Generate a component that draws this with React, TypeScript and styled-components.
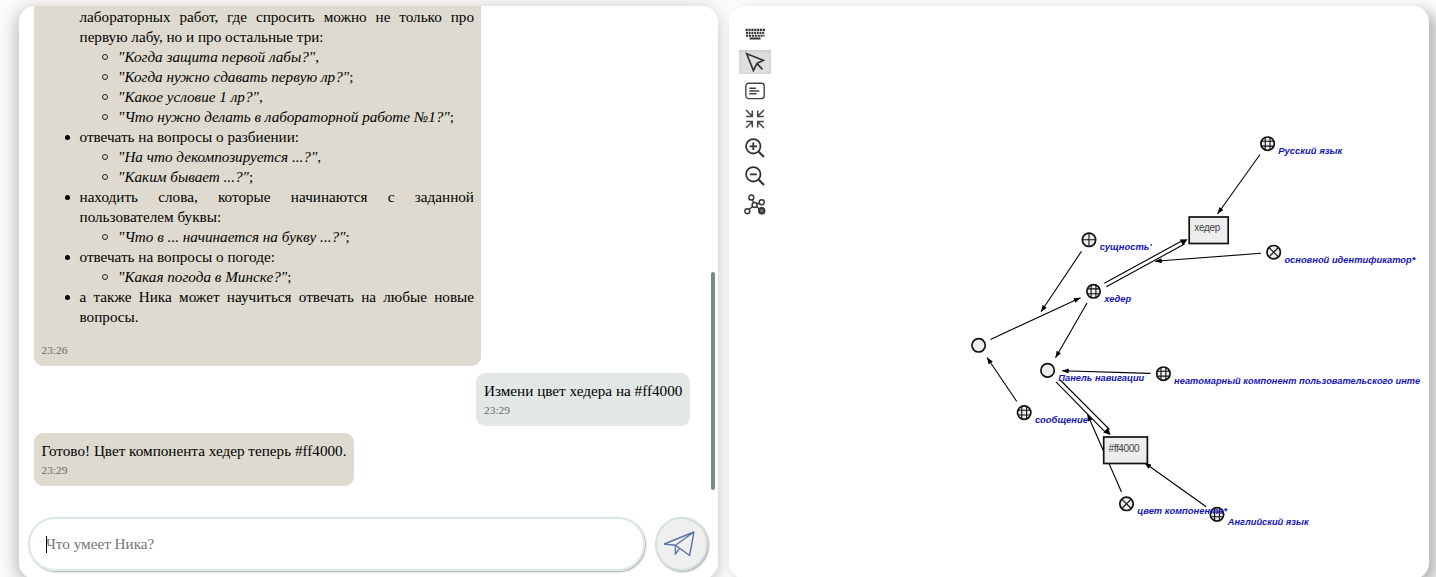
import React from 'react';
import styled, { createGlobalStyle } from 'styled-components';

const GlobalStyle = createGlobalStyle`
  *, *::before { box-sizing: border-box; }
  body {
    margin: 0;
    overflow: hidden;
    background: #fdfafb;
    font-family: "Liberation Serif", "Times New Roman", serif;
    color: #000;
  }
`;

const Page = styled.main`
  display: flex;
  gap: 11px;
  height: 577px;
  padding: 6px 7px 0 19px;
  overflow: hidden;
`;

const Panel = styled.section`
  display: flex;
  height: 573px;
  background: #fff;
  border-radius: 16px;
  overflow: hidden;
`;

const ChatPanel = styled(Panel)`
  flex: 0 0 699px;
  flex-direction: column;
  box-shadow: -2px 4px 18px rgba(0, 0, 0, 0.28);
`;

const GraphPanel = styled(Panel)`
  flex: 1;
  box-shadow: 8px 5px 14px rgba(0, 0, 0, 0.28);
`;

const Feed = styled.div`
  display: flex;
  height: 484px;
  padding-right: 3px;
`;

const Messages = styled.div`
  flex: 1;
  display: flex;
  flex-direction: column;
  justify-content: flex-end;
  gap: 7.7px;
  padding: 0 21px 4.4px 15px;
  overflow: hidden;
`;

const ScrollTrack = styled.div`
  width: 4px;
  padding-top: 266px;
`;

const ScrollThumb = styled.div`
  height: 218px;
  border-radius: 2px;
  background: #748c86;
`;

const Bubble = styled.article<{ $own?: boolean; $width: number }>`
  flex: none;
  align-self: ${(p) => (p.$own ? 'flex-end' : 'flex-start')};
  width: ${(p) => p.$width}px;
  padding: 8px 7px 5.2px ${(p) => (p.$own ? 8 : 7.5)}px;
  border-radius: 9px;
  background: ${(p) => (p.$own ? '#e2e8e6' : '#dedacf')};
  font-size: 15.2px;
  line-height: 19.95px;
`;

const Line = styled.p`
  margin: 0;
  white-space: nowrap;
`;

const Time = styled.time`
  display: block;
  font-size: 11.4px;
  line-height: 19.2px;
  color: #696969;
`;

const Topics = styled.ul`
  margin: 0 0 14.6px;
  padding-left: 38px;
  list-style: none;
  text-align: justify;
`;

const Topic = styled.li<{ $continued?: boolean }>`
  &::before {
    content: '';
    display: ${(p) => (p.$continued ? 'none' : 'inline-block')};
    width: 5px;
    height: 5px;
    margin: 0 9.3px 0 -14.3px;
    border-radius: 50%;
    background: #000;
    vertical-align: 2px;
  }
`;

const Examples = styled.ul`
  margin: 0;
  padding-left: 38.5px;
  list-style: none;
`;

const Example = styled.li`
  &::before {
    content: '';
    display: inline-block;
    width: 6px;
    height: 6px;
    margin: 0 9.8px 0 -15.8px;
    border: 1px solid #222;
    border-radius: 50%;
    vertical-align: 2px;
  }
`;

const Composer = styled.form`
  display: flex;
  gap: 10px;
  padding: 27px 10.5px 0 9px;
`;

const Prompt = styled.div`
  flex: 1;
  display: flex;
  align-items: center;
  height: 54px;
  padding-left: 16px;
  border: 2px solid #dce8e6;
  border-radius: 27px;
  box-shadow: 1px 1px 2px rgba(0, 0, 0, 0.35);
  font-size: 15.2px;
  color: #757575;
`;

const Caret = styled.span`
  width: 1px;
  height: 17px;
  margin-right: -1px;
  background: #000;
`;

const SendButton = styled.button`
  display: grid;
  place-items: center;
  width: 52.5px;
  height: 54px;
  padding: 0;
  border: 2px solid #d5e1df;
  border-radius: 50%;
  background: #efefef;
  box-shadow: 1px 1px 2px rgba(0, 0, 0, 0.35);
`;

const Toolbar = styled.nav`
  display: flex;
  flex-direction: column;
  gap: 4.5px;
  width: 42px;
  padding: 15.5px 0 0 10px;
`;

const Tool = styled.button<{ $active?: boolean }>`
  display: grid;
  place-items: center;
  width: 32px;
  height: 24px;
  padding: 0;
  border: 0;
  background: ${(p) => (p.$active ? '#dedede' : 'transparent')};
  box-shadow: ${(p) => (p.$active ? 'inset 0 1px 3px #c4c4c4' : 'none')};
`;

const Canvas = styled.div`
  flex: none;
  width: 650px;

  svg { display: block; }
  text { font-family: "Liberation Sans", Arial, sans-serif; }
`;

const topics: { text: string; continued?: boolean; examples?: [string, string][] }[] = [
  {
    text: 'лабораторных работ, где спросить можно не только про первую лабу, но и про остальные три:',
    continued: true,
    examples: [
      ['"Когда защита первой лабы?"', ','],
      ['"Когда нужно сдавать первую лр?"', ';'],
      ['"Какое условие 1 лр?"', ','],
      ['"Что нужно делать в лабораторной работе №1?"', ';'],
    ],
  },
  {
    text: 'отвечать на вопросы о разбиении:',
    examples: [
      ['"На что декомпозируется ...?"', ','],
      ['"Каким бывает ...?"', ';'],
    ],
  },
  {
    text: 'находить слова, которые начинаются с заданной пользователем буквы:',
    examples: [['"Что в ... начинается на букву ...?"', ';']],
  },
  { text: 'отвечать на вопросы о погоде:', examples: [['"Какая погода в Минске?"', ';']] },
  { text: 'а также Ника может научиться отвечать на любые новые вопросы.' },
];

const ink = '#333';

const KeyboardIcon = () => (
  <svg width="20" height="12" viewBox="0 0 20 12" fill="none" stroke={ink}>
    <path d="M0.5 1.8H20" strokeWidth="2.2" strokeDasharray="2.2 .7" />
    <path d="M1 4.8H19.5" strokeWidth="2.2" strokeDasharray="1.9 .8" />
    <path d="M1 7.8H19.5" strokeWidth="2.1" strokeDasharray="2.2 .7" />
    <path d="M4.5 10.6H15.5" strokeWidth="2" />
  </svg>
);

const PointerIcon = () => (
  <svg width="20" height="20" viewBox="0 0 20 20" fill="none" stroke={ink} strokeWidth="1.7">
    <path d="M1.7 1.8L18.3 8.3L12 11.3L8.4 18.5ZM11.8 11.4L17.5 17.3" />
  </svg>
);

const NoteIcon = () => (
  <svg width="20" height="18" viewBox="0 0 20 18" fill="none" stroke="#444" strokeWidth="1.4">
    <rect x=".8" y="1.2" width="18.4" height="15.4" rx="2.8" />
    <path d="M4.3 6.2H11M4.3 9H14.3M4.3 11.8H11.5" />
  </svg>
);

const CollapseIcon = () => (
  <svg width="20" height="20" viewBox="0 0 20 20" fill="none" stroke="#444" strokeWidth="1.5">
    <path d="M1 1L7 7M7.3 1.5V7.4H1.2M19 1L13 7M12.7 1.5V7.4H18.8M1 19L7 13M7.3 18.5V12.6H1.2M19 19L13 13M12.7 18.5V12.6H18.8" />
  </svg>
);

const ZoomIcon = ({ plus }: { plus?: boolean }) => (
  <svg width="20" height="20" viewBox="0 0 20 20" fill="none" stroke={ink} strokeWidth="1.8">
    <circle cx="8.3" cy="8.3" r="7.2" />
    <path d="M13.5 13.5L19 19" strokeWidth="2.2" />
    <path d={plus ? 'M4.6 8.3H12M8.3 4.6V12' : 'M4.8 8.3H11.8'} />
  </svg>
);

const NetworkIcon = () => (
  <svg width="22" height="22" viewBox="0 0 22 22" fill="none" stroke={ink} strokeWidth="1.4">
    <path d="M8 5.5L10.2 9M12.5 10L15.5 9.3M8.7 12.5L5 15.5M12.3 12.5L15.8 15.2" />
    <circle cx="7.3" cy="3.5" r="2.5" />
    <circle cx="10.6" cy="11" r="2.5" />
    <circle cx="17.7" cy="8.2" r="2.5" />
    <circle cx="3.3" cy="17.2" r="2.5" />
    <circle cx="17.7" cy="16.8" r="2.7" fill="#777" strokeWidth="2" />
  </svg>
);

const SendIcon = () => (
  <svg width="34" height="28" viewBox="0 0 34 28" fill="none" stroke="#5d74a0" strokeWidth="1.4" strokeLinejoin="round">
    <path d="M.1 14L29.9 2L25.6 25.5L11.4 15.2ZM11.4 15.2L29.9 2M11.4 15.2V24.2L15.6 18.3" />
  </svg>
);

type Kind = 'empty' | 'plus' | 'grid' | 'cross';

const marks: Record<Kind, string> = {
  empty: '',
  plus: 'M-6.5 0H6.5M0-6.5V6.5',
  grid: 'M-6-2.4H6M-6 2.4H6M-2.4-6V6M2.4-6V6',
  cross: 'M-4.7-4.7L4.7 4.7M4.7-4.7L-4.7 4.7',
};

const nodes: { x: number; y: number; kind: Kind; label?: string; width?: number }[] = [
  { x: 1267.6, y: 143.7, kind: 'grid', label: 'Русский язык', width: 64 },
  { x: 1089, y: 239.8, kind: 'plus', label: "сущность'", width: 52 },
  { x: 1273.7, y: 252.2, kind: 'cross', label: 'основной идентификатор*', width: 131 },
  { x: 1093.5, y: 291.3, kind: 'grid', label: 'хедер', width: 27 },
  { x: 978.6, y: 345.3, kind: 'empty' },
  { x: 1047.6, y: 370.4, kind: 'empty', label: 'Панель навигации', width: 86 },
  { x: 1163.4, y: 373.7, kind: 'grid', label: 'неатомарный компонент пользовательского инте', width: 246 },
  { x: 1024.2, y: 412.6, kind: 'grid', label: 'сообщение', width: 53 },
  { x: 1126.5, y: 503.8, kind: 'cross', label: 'цвет компонента*', width: 90 },
  { x: 1217, y: 514.4, kind: 'grid', label: 'Английский язык', width: 81 },
];

const arcs: [number, number, number, number][] = [
  [1260, 154.5, 1217.5, 214],
  [1261, 253.3, 1155, 261.2],
  [1081.5, 251.3, 1041, 311.8],
  [990.5, 339.5, 1080.5, 297.7],
  [1087, 303, 1055.5, 357.8],
  [1150.5, 373.4, 1062, 370.8],
  [1016.8, 401.5, 987, 357.5],
  [1121.5, 492, 1087.5, 414.5],
  [1206.2, 506.8, 1144.5, 462.8],
];

const Graph = () => (
  <svg width="650" height="571" viewBox="771 6 650 571">
    <defs>
      <marker id="tip" viewBox="0 0 8 6" refX="8" refY="3" markerWidth="7" markerHeight="5" markerUnits="userSpaceOnUse" orient="auto">
        <path d="M0 0L8 3L0 6Z" />
      </marker>
      <marker id="wideTip" viewBox="0 0 8 8" refX="8" refY="4" markerWidth="7" markerHeight="7" markerUnits="userSpaceOnUse" orient="auto">
        <path d="M0 0L8 4L0 8Z" />
      </marker>
    </defs>
    <g stroke="#000" strokeWidth="1.1" fill="none">
      {arcs.map(([x1, y1, x2, y2]) => (
        <path key={`${x1}-${y1}`} d={`M${x1} ${y1}L${x2} ${y2}`} markerEnd="url(#tip)" />
      ))}
      <path d="M1104.3 283.2L1183 240.3M1106.3 286.8L1184.5 244" />
      <path d="M1181 242.8L1187.5 239.2" stroke="none" markerEnd="url(#wideTip)" />
      <path d="M1056 381.8L1105.5 432.3M1060.2 380L1109.5 429.5" />
      <path d="M1105 429.5L1110.6 435" stroke="none" markerEnd="url(#wideTip)" />
    </g>
    <g fill="#ededed" stroke="#111" strokeWidth="1.7">
      <rect x="1189.2" y="217" width="39" height="26.5" />
      <rect x="1103.7" y="437" width="43.7" height="26.5" />
    </g>
    <g fill="#444" fontSize="10">
      <text x="1194.3" y="231.3" textLength="26">хедер</text>
      <text x="1108.5" y="451.6" textLength="31">#ff4000</text>
    </g>
    {nodes.map((node) => (
      <g key={`${node.x}-${node.y}`} transform={`translate(${node.x} ${node.y})`}>
        <circle r="6.7" fill="#ededed" stroke="#111" strokeWidth="1.7" />
        <path d={marks[node.kind]} stroke="#111" strokeWidth="1.1" />
      </g>
    ))}
    <g fill="#1616b5" fontSize="9.8" fontWeight="bold" fontStyle="italic">
      {nodes.map((node) => node.label && (
        <text key={node.label} x={node.x + 10.7} y={node.y + 10.3} textLength={node.width} lengthAdjust="spacingAndGlyphs">
          {node.label}
        </text>
      ))}
    </g>
  </svg>
);

export default function App() {
  return (
    <>
      <GlobalStyle />
      <Page>
        <ChatPanel>
          <Feed>
            <Messages>
              <Bubble $width={447}>
                <Topics>
                  {topics.map((topic) => (
                    <Topic key={topic.text} $continued={topic.continued}>
                      {topic.text}
                      {topic.examples && (
                        <Examples>
                          {topic.examples.map(([quote, end]) => (
                            <Example key={quote}><em>{quote}</em>{end}</Example>
                          ))}
                        </Examples>
                      )}
                    </Topic>
                  ))}
                </Topics>
                <Time>23:26</Time>
              </Bubble>
              <Bubble $own $width={214}>
                <Line>Измени цвет хедера на #ff4000</Line>
                <Time>23:29</Time>
              </Bubble>
              <Bubble $width={320}>
                <Line>Готово! Цвет компонента хедер теперь #ff4000.</Line>
                <Time>23:29</Time>
              </Bubble>
            </Messages>
            <ScrollTrack><ScrollThumb /></ScrollTrack>
          </Feed>
          <Composer>
            <Prompt><Caret />Что умеет Ника?</Prompt>
            <SendButton type="button" aria-label="Отправить"><SendIcon /></SendButton>
          </Composer>
        </ChatPanel>
        <GraphPanel>
          <Toolbar>
            <Tool><KeyboardIcon /></Tool>
            <Tool $active><PointerIcon /></Tool>
            <Tool><NoteIcon /></Tool>
            <Tool><CollapseIcon /></Tool>
            <Tool><ZoomIcon plus /></Tool>
            <Tool><ZoomIcon /></Tool>
            <Tool><NetworkIcon /></Tool>
          </Toolbar>
          <Canvas><Graph /></Canvas>
        </GraphPanel>
      </Page>
    </>
  );
}
